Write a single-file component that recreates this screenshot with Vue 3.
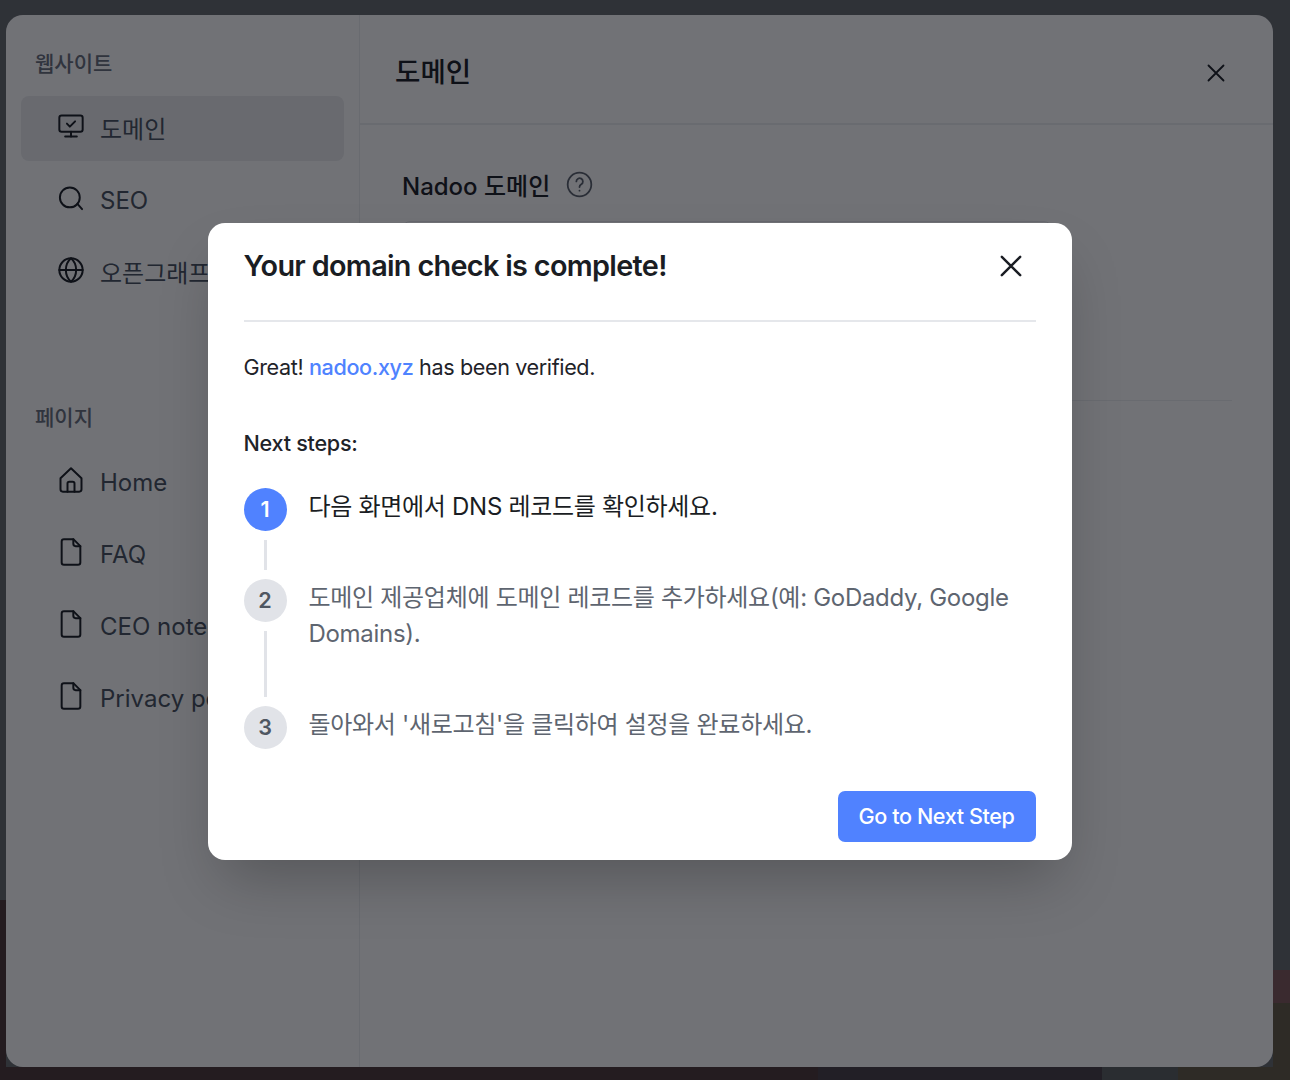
<template>
  <div class="page">
    <div class="window">
      <aside class="sidebar">
        <section v-for="group in groups" :key="group.title" class="group">
          <h4 class="group-title">{{ group.title }}</h4>
          <div
            v-for="item in group.items"
            :key="item.label"
            class="nav-item"
            :class="{ active: item.active }"
          >
            <svg class="nav-icon" viewBox="0 0 24 24" fill="none" stroke="currentColor" stroke-width="1.7" stroke-linecap="round" stroke-linejoin="round">
              <path v-for="d in icons[item.icon]" :key="d" :d="d" />
            </svg>
            <span class="nav-label" :class="{ ko: item.ko }">{{ item.label }}</span>
          </div>
        </section>
      </aside>

      <main class="content">
        <header class="content-head">
          <h2>도메인</h2>
          <svg class="head-close" viewBox="0 0 24 24" fill="none" stroke="currentColor" stroke-width="2.2" stroke-linecap="round">
            <path d="M3 3l18 18M21 3L3 21" />
          </svg>
        </header>
        <div class="content-body">
          <div class="section-title">
            <span>Nadoo 도메인</span>
            <svg class="help" viewBox="0 0 24 24" fill="none" stroke="currentColor" stroke-width="1.6" stroke-linecap="round">
              <circle cx="12" cy="12" r="10.500" />
              <path d="M9.200 9.300a2.900 2.900 0 1 1 4.400 2.500c-1 .6-1.600 1.200-1.600 2.400" />
              <path d="M12 17.400v.1" />
            </svg>
          </div>
          <div class="domain-card"></div>
          <div class="section-rule"></div>
        </div>
      </main>

      <div class="modal-layer">
        <div class="modal">
          <div class="modal-head">
            <h3>Your domain check is complete!</h3>
            <svg class="modal-close" viewBox="0 0 24 24" fill="none" stroke="currentColor" stroke-width="2.700" stroke-linecap="round">
              <path d="M2 2l20 20M22 2L2 22" />
            </svg>
          </div>
          <p class="verified">Great! <span class="domain">nadoo.xyz</span> has been verified.</p>
          <p class="next">Next steps:</p>
          <ol class="steps">
            <li v-for="(step, i) in steps" :key="i" class="step" :class="{ current: i === 0 }">
              <div class="marker">
                <span class="dot">{{ i + 1 }}</span>
                <span v-if="i < steps.length - 1" class="connector"></span>
              </div>
              <p class="step-text">{{ step }}</p>
            </li>
          </ol>
          <div class="modal-foot">
            <button class="next-btn">Go to Next Step</button>
          </div>
        </div>
      </div>
    </div>
    <div class="overlay"></div>
  </div>
</template>

<script setup>
const icons = {
  monitor: [
    'M4 3h16a2 2 0 0 1 2 2v10a2 2 0 0 1-2 2H4a2 2 0 0 1-2-2V5a2 2 0 0 1 2-2z',
    'M8.500 10l2.500 2.500 4.500-4.500',
    'M12 17v4',
    'M7 21h10'
  ],
  search: ['M11 3a8.500 8.500 0 1 0 0 17 8.500 8.500 0 0 0 0-17z', 'M17.500 17l4 4.500'],
  globe: [
    'M12 2a10 10 0 1 0 0 20 10 10 0 0 0 0-20z',
    'M2 12h20',
    'M12 2c3 2.600 4.400 6 4.400 10S15 19.400 12 22c-3-2.600-4.400-6-4.400-10S9 4.600 12 2z'
  ],
  home: [
    'M3 10.500 12 2l9 8.500V20a2 2 0 0 1-2 2H5a2 2 0 0 1-2-2z',
    'M9 22v-7a1.500 1.500 0 0 1 1.500-1.500h3A1.500 1.500 0 0 1 15 15v7'
  ],
  file: [
    'M14 1H6a2 2 0 0 0-2 2v18a2 2 0 0 0 2 2h12a2 2 0 0 0 2-2V7z',
    'M14 1v4a2 2 0 0 0 2 2h4'
  ]
};

const groups = [
  {
    title: '웹사이트',
    items: [
      { label: '도메인', icon: 'monitor', active: true, ko: true },
      { label: 'SEO', icon: 'search' },
      { label: '오픈그래프', icon: 'globe', ko: true }
    ]
  },
  {
    title: '페이지',
    items: [
      { label: 'Home', icon: 'home' },
      { label: 'FAQ', icon: 'file' },
      { label: 'CEO note', icon: 'file' },
      { label: 'Privacy policy', icon: 'file' }
    ]
  }
];

const steps = [
  '다음 화면에서 DNS 레코드를 확인하세요.',
  '도메인 제공업체에 도메인 레코드를 추가하세요(예: GoDaddy, Google Domains).',
  "돌아와서 '새로고침'을 클릭하여 설정을 완료하세요."
];
</script>

<style>
body {
  margin: 0;
  background: #2f3237;
}
</style>

<style scoped>
.page {
  position: relative;
  box-sizing: border-box;
  width: 1290px;
  height: 1080px;
  padding: 15px 17px 13px 6px;
  overflow: hidden;
  font-family: Inter, "Noto Sans CJK KR", sans-serif;
  color: #1f2329;
  background:
    linear-gradient(#825b5f, #825b5f) right 970px / 17px 33px no-repeat,
    linear-gradient(#665f49, #665f49) right 1003px / 17px 77px no-repeat,
    linear-gradient(to right, #503b3b 0, #503b3b 818px, #4d4249 818px, #4d4249 1102px, #5d6262 1102px, #5d6262 1178px, #665f49 1178px) left 1067px / 100% 13px no-repeat,
    linear-gradient(#503b3b, #503b3b) left 900px / 6px 180px no-repeat,
    #696d70;
}

.overlay {
  position: absolute;
  inset: 0;
  z-index: 1;
  background: rgba(2, 3, 10, 0.56);
}

.window {
  position: relative;
  display: flex;
  height: 100%;
  background: #fff;
  border-radius: 17px;
  overflow: hidden;
}

.sidebar {
  box-sizing: border-box;
  flex: 0 0 354px;
  padding: 33px 15px 0;
  border-right: 1px solid #eceef1;
}

.group + .group {
  margin-top: 97px;
}

.group-title {
  margin: 0 0 16px 14px;
  font-size: 21px;
  line-height: 32px;
  font-weight: 500;
  color: #6b7280;
}

.nav-item {
  display: flex;
  align-items: center;
  gap: 15px;
  height: 65px;
  margin-bottom: 7px;
  padding-left: 36px;
  border-radius: 8px;
  font-size: 24px;
  color: #4b5563;
}

.nav-item.active {
  background: #ecedef;
}

.nav-icon {
  flex: none;
  width: 28px;
  height: 28px;
  color: #1f2329;
  margin-top: -5px;
}

.nav-label {
  white-space: nowrap;
}

.nav-label.ko {
  margin-bottom: 3px;
}

.content {
  flex: 1;
  min-width: 0;
}

.content-head {
  display: flex;
  align-items: center;
  justify-content: space-between;
  box-sizing: border-box;
  height: 110px;
  padding: 0 47px 0 35px;
  border-bottom: 2px solid #eceef1;
}

.content-head h2 {
  margin: 2px 0 0;
  font-size: 27.600px;
  font-weight: 500;
}

.head-close {
  width: 20px;
  height: 20px;
  margin-top: 7px;
}

.content-body {
  padding: 41px 41px 0 42px;
}

.section-title {
  display: flex;
  align-items: center;
  gap: 16px;
  height: 36px;
  font-size: 24px;
  font-weight: 500;
}

.help {
  width: 27px;
  height: 27px;
  color: #5e6570;
}

.domain-card {
  width: 648px;
  height: 140px;
  margin-top: 19px;
  border: 1px solid #e5e7eb;
  border-radius: 8px;
}

.section-rule {
  margin-top: 37px;
  height: 1px;
  background: #eceef1;
}

.modal-layer {
  position: absolute;
  inset: 0;
  z-index: 2;
  display: flex;
  align-items: center;
  justify-content: center;
}

.modal {
  box-sizing: border-box;
  width: 864px;
  height: 637px;
  padding: 0 36px;
  background: #fff;
  border-radius: 17px;
  box-shadow: 0 30px 60px -14px rgba(0, 0, 0, 0.25);
}

.modal-head {
  display: flex;
  align-items: center;
  justify-content: space-between;
  height: 86px;
  padding-bottom: 11px;
  padding-right: 14px;
  border-bottom: 2px solid #e5e7eb;
}

.modal-head h3 {
  margin: 0;
  font-size: 28.800px;
  line-height: 36px;
  font-weight: 600;
  letter-spacing: -0.67px;
  color: #1a1d23;
}

.modal-close {
  width: 22px;
  height: 22px;
  color: #1a1d23;
}

.verified {
  margin: 29px 0 0;
  font-size: 21.600px;
  line-height: 32px;
  letter-spacing: -0.38px;
}

.domain {
  color: #4f83ff;
  font-weight: 500;
}

.next {
  margin: 44px 0 0;
  font-size: 21.600px;
  line-height: 32px;
  font-weight: 500;
  letter-spacing: -0.27px;
}

.steps {
  margin: 29px 0 0;
  padding: 0;
  list-style: none;
}

.step {
  display: flex;
  gap: 22px;
  color: #5e6570;
}

.step.current {
  color: #1a1d23;
}

.marker {
  display: flex;
  flex-direction: column;
  align-items: center;
  flex: 0 0 43px;
}

.dot {
  display: flex;
  align-items: center;
  justify-content: center;
  flex: none;
  width: 43px;
  height: 43px;
  border-radius: 50%;
  background: #e1e3e8;
  font-size: 21.600px;
  font-weight: 600;
  color: #4f5661;
}

.current .dot {
  background: #5082ff;
  color: #fff;
}

.connector {
  flex: 1;
  width: 3px;
  margin: 9px 0;
  background: #e1e3e8;
}

.step-text {
  margin: 1px 0 0;
  padding-bottom: 54px;
  font-size: 24px;
  line-height: 36px;
  letter-spacing: -0.3px;
}

.step:last-child .step-text {
  padding-bottom: 0;
}

.modal-foot {
  display: flex;
  justify-content: flex-end;
  margin-top: 42px;
}

.next-btn {
  width: 198px;
  height: 51px;
  padding: 0;
  border: 0;
  border-radius: 7px;
  background: #5082ff;
  color: #fff;
  font-family: inherit;
  font-size: 21.600px;
  font-weight: 500;
  letter-spacing: -0.4px;
}
</style>
